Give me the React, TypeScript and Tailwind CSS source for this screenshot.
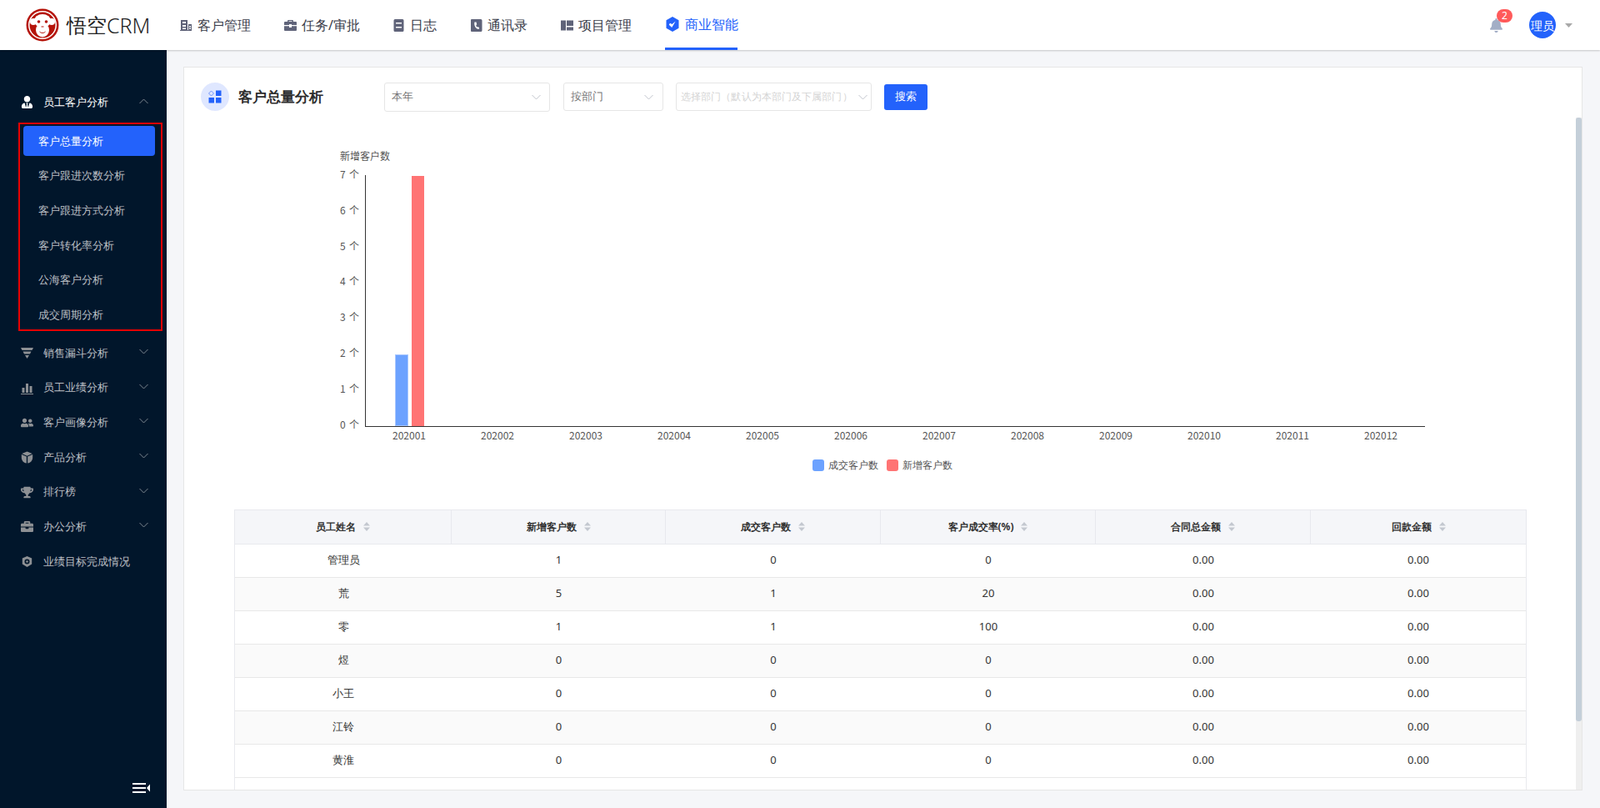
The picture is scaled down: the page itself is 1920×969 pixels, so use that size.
import { FaBell, FaBriefcase, FaTrophy, FaUserFriends, FaUserTie } from "react-icons/fa";

const navItems = [
  { label: "客户管理", w: "w-[125px]", icon: "building" },
  { label: "任务/审批", w: "w-[130px]", icon: "case" },
  { label: "日志", w: "w-[93px]", icon: "note" },
  { label: "通讯录", w: "w-[109px]", icon: "phone" },
  { label: "项目管理", w: "w-[125px]", icon: "board" },
];

const subMenu = ["客户总量分析", "客户跟进次数分析", "客户跟进方式分析", "客户转化率分析", "公海客户分析", "成交周期分析"];

const columns = ["员工姓名", "新增客户数", "成交客户数", "客户成交率(%)", "合同总金额", "回款金额"];

const rows = [
  ["管理员", "1", "0", "0", "0.00", "0.00"],
  ["荒", "5", "1", "20", "0.00", "0.00"],
  ["零", "1", "1", "100", "0.00", "0.00"],
  ["煜", "0", "0", "0", "0.00", "0.00"],
  ["小王", "0", "0", "0", "0.00", "0.00"],
  ["江铃", "0", "0", "0", "0.00", "0.00"],
  ["黄淮", "0", "0", "0", "0.00", "0.00"],
];

function NavIcon({ name }: { name: string }) {
  const fill = "#5f6379";
  return (
    <svg width="15" height="15" viewBox="0 0 15 15" className="shrink-0">
      {name === "building" && (
        <path
          fill={fill}
          fillRule="evenodd"
          d="M1 1h8v12h1V6h4v8H0v-1h1zM3 3v2h4V3zM3 7v2h4V7zM3 10.5V12h4v-1.5zM11 8v1.500h2V8zM11 10.500V12h2v-1.500z"
        />
      )}
      {name === "case" && (
        <path
          fill={fill}
          fillRule="evenodd"
          d="M5 1h5a1 1 0 0 1 1 1v1h3a1 1 0 0 1 1 1v3H9V6H6v1H0V4a1 1 0 0 1 1-1h3V2a1 1 0 0 1 1-1zm.500 1.300V3h4v-.700zM0 8.300h6V10h3V8.300h6V13a1 1 0 0 1-1 1H1a1 1 0 0 1-1-1z"
        />
      )}
      {name === "note" && (
        <path
          fill={fill}
          fillRule="evenodd"
          d="M3 0h9a1.500 1.500 0 0 1 1.500 1.500v12A1.500 1.500 0 0 1 12 15H3a1.500 1.500 0 0 1-1.500-1.500v-12A1.500 1.500 0 0 1 3 0zm1 4v1.500h7V4zm0 5v1.500h7V9z"
        />
      )}
      {name === "phone" && (
        <path
          fill={fill}
          fillRule="evenodd"
          d="M2 0h11a1.500 1.500 0 0 1 1.500 1.500v12A1.500 1.500 0 0 1 13 15H2a1 1 0 0 1-1-1V1a1 1 0 0 1 1-1zm3.500 3.500C5 5 5.200 7.500 6.300 9.200c1 1.700 2.800 2.700 4 2.800l1-1.500-2-1.500-.800.700C7.800 9 7.300 8 7.200 7l1-.500-.700-3z"
        />
      )}
      {name === "board" && (
        <path fill={fill} d="M0 1.500h6v12H0zM7 1.500h8v6.500H7zM7 9.500h8v4H7z" />
      )}
    </svg>
  );
}

function Chevron({ up, className }: { up?: boolean; className?: string }) {
  return (
    <svg width="11" height="7" viewBox="0 0 11 7" className={className}>
      <path
        d={up ? "M.5 6 5.500 1l5 5" : "M.5 1l5 5 5-5"}
        fill="none"
        stroke="currentColor"
        strokeWidth="1"
      />
    </svg>
  );
}

function SideIcon({ name }: { name: string }) {
  const cls = "text-[#8d9094]";
  if (name === "user") return <FaUserTie size={15} className="text-white" />;
  if (name === "users") return <FaUserFriends size={16} className={cls} />;
  if (name === "trophy") return <FaTrophy size={15} className={cls} />;
  if (name === "case") return <FaBriefcase size={15} className={cls} />;
  return (
    <svg width="15" height="15" viewBox="0 0 15 15" className={cls}>
      {name === "funnel" && <path fill="currentColor" d="M0 1h15l-1.500 3h-12zM2.500 5.500h10l-1.500 3H4zM5 10h5l-2.500 4z" />}
      {name === "bars" && <path fill="currentColor" d="M1.500 7h3v6h-3zM6 2h3v11H6zM10.500 5h3v8h-3zM0 14h15v1H0z" />}
      {name === "cube" && (
        <path
          fill="currentColor"
          d="M7.500.5 13.700 3 7.500 5.700 1.300 3zM.8 4l6 2.600v7.900C3 14 .8 11 .8 7.500zM14.200 4v3.500c0 3.500-2.200 6.500-6 7V6.600z"
        />
      )}
      {name === "target" && (
        <path
          fill="currentColor"
          fillRule="evenodd"
          d="M7.500 1l5.700 2.500v7L7.500 14l-5.700-3.500v-7zM7.500 4.500a3 3 0 1 0 0 6 3 3 0 0 0 0-6zm0 1.700a1.300 1.300 0 1 1 0 2.600 1.300 1.300 0 0 1 0-2.600z"
        />
      )}
    </svg>
  );
}

function SideItem({ icon, label, chevron = true }: { icon: string; label: string; chevron?: boolean }) {
  return (
    <div className="h-[41.67px] flex items-center pl-[25px] text-[13px] text-[#bcbfc4]">
      <span className="w-[15px] flex justify-center">
        <SideIcon name={icon} />
      </span>
      <span className="ml-[12px]">{label}</span>
      {chevron && <Chevron className="ml-auto mr-[22px] -mt-[4px] text-[#7f8791]" />}
    </div>
  );
}

function SortCaret() {
  return (
    <svg width="8" height="11" viewBox="0 0 8 11" className="ml-[9px] shrink-0">
      <path fill="#c4c8d0" d="M4 0l4 4.500H0zM4 11L0 6.500h8z" />
    </svg>
  );
}

function Logo() {
  return (
    <svg width="40" height="40" viewBox="0 0 40 40" className="shrink-0">
      <circle cx="20" cy="20" r="19.500" fill="#b5140a" />
      <circle cx="20" cy="20" r="17" fill="#fff" />
      <circle cx="20" cy="20" r="15.500" fill="#b5140a" />
      <circle cx="9" cy="16" r="4" fill="#fff" />
      <circle cx="31" cy="16" r="4" fill="#fff" />
      <ellipse cx="20" cy="15" rx="10" ry="8" fill="#fff" />
      <ellipse cx="20" cy="26" rx="8" ry="8.500" fill="#fff" />
      <circle cx="15.500" cy="16" r="1.800" fill="#b5140a" />
      <circle cx="24.500" cy="16" r="1.800" fill="#b5140a" />
      <path d="M16.500 28c2 2 5 2 7 0" fill="none" stroke="#b5140a" strokeWidth="1" />
      <path d="M18.500 22h3" fill="none" stroke="#b5140a" strokeWidth="1" />
    </svg>
  );
}

function Chart() {
  const months = ["202001", "202002", "202003", "202004", "202005", "202006", "202007", "202008", "202009", "202010", "202011", "202012"];
  const axisFont = { fontFamily: '"Noto Sans CJK SC", sans-serif', fontSize: 12 };
  return (
    <svg width="1400" height="440" viewBox="220 170 1400 440" className="absolute -left-px top-[89px]" style={{ overflow: "visible" }}>
      <g style={axisFont} fill="#555">
        <text x="408" y="192">新增客户数</text>
        {[0, 1, 2, 3, 4, 5, 6, 7].map((n) => (
          <g key={n}>
            <text x="408" y={514 - n * 42.9}>
              {n}
            </text>
            <text x="419" y={514 - n * 42.9}>
              个
            </text>
          </g>
        ))}
        {months.map((m, i) => (
          <text key={m} x={491 + i * 106} y="527" textAnchor="middle">
            {m}
          </text>
        ))}
      </g>
      <line x1="438.500" y1="210" x2="438.500" y2="512" stroke="#333" strokeWidth="1" />
      <line x1="438" y1="511.500" x2="1710" y2="511.500" stroke="#333" strokeWidth="1" />
      <rect x="474.500" y="425.500" width="15" height="85" fill="#6ca2ff" stroke="#a9c8ff" strokeWidth="1" />
      <rect x="494" y="211" width="15" height="300" fill="#ff7474" />
    </svg>
  );
}

export default function App() {
  return (
    <div className="h-[969px] w-[1920px] overflow-hidden flex flex-col bg-[#f5f6f9] text-[#333] font-['Liberation_Sans','Noto_Sans_CJK_SC',sans-serif]">
      {/* Top bar */}
      <header className="relative z-10 h-[60px] shrink-0 bg-white flex items-center shadow-[0_1px_2px_rgba(0,0,0,0.2)]">
        <div className="flex items-center w-[216px] pl-[31px]">
          <Logo />
          <span className="ml-[9px] flex items-center text-[#222] whitespace-nowrap">
            <span className="text-[24px] font-medium font-['Noto_Sans_CJK_SC',sans-serif] leading-none">悟空</span>
            <span className="text-[25px] font-['Inter',sans-serif] font-light leading-none">CRM</span>
          </span>
        </div>
        <nav className="flex items-center h-full">
          {navItems.map((item) => (
            <div key={item.label} className={`${item.w} flex items-center text-[16px] text-[#3a3d4a] whitespace-nowrap`}>
              <NavIcon name={item.icon} />
              <span className="ml-[6px]">{item.label}</span>
            </div>
          ))}
          <div className="relative h-full w-[87px] flex items-center text-[16px] text-[#2362fb] whitespace-nowrap border-b-[3px] border-[#2362fb] pl-[1px]">
            <svg width="16" height="18" viewBox="0 0 16 18" className="shrink-0">
              <path
                fill="#2362fb"
                fillRule="evenodd"
                d="M8 0l7.500 4.300v9.400L8 18 .5 13.700V4.300zM11.700 5.500 7.500 9 5 7.800 3.800 9.800l3.400 3.200z"
              />
            </svg>
            <span className="ml-[7px]">商业智能</span>
          </div>
        </nav>
        <div className="ml-auto flex items-center pr-[33px]">
          <div className="relative">
            <FaBell size={17} className="text-[#a3aec6]" />
            <span className="absolute left-[9px] -top-[11px] w-[19px] h-[16px] rounded-full bg-[#ff5a5a] text-white text-[12px] leading-[16px] text-center">
              2
            </span>
          </div>
          <div className="ml-[31px] w-[32px] h-[32px] rounded-full bg-[#2362fb] text-white text-[14px] flex items-center justify-center whitespace-nowrap">
            理员
          </div>
          <svg width="9" height="5" viewBox="0 0 9 5" className="ml-[11px]">
            <path fill="#a8a8a8" d="M0 0h9L4.500 5z" />
          </svg>
        </div>
      </header>

      <div className="flex-1 flex min-h-0">
        {/* Sidebar */}
        <aside className="relative w-[200px] shrink-0 bg-[#01162b] pt-[42px]">
          <div className="h-[41.67px] flex items-center pl-[25px] text-[13px] text-white">
            <span className="w-[15px] flex justify-center">
              <SideIcon name="user" />
            </span>
            <span className="ml-[12px]">员工客户分析</span>
            <Chevron up className="ml-auto mr-[22px] -mt-[2px] text-[#7f8791]" />
          </div>
          <div className="relative mt-[5px] mb-[4px]">
            {subMenu.map((s, i) => (
              <div key={s} className="h-[41.67px] flex items-center pl-[28px] pr-[14px]">
                <div
                  className={
                    i === 0
                      ? "w-full h-[36px] flex items-center pl-[18px] rounded-[4px] bg-[#2362fb] text-white text-[13px]"
                      : "w-full h-[36px] flex items-center pl-[18px] text-[#bcbfc4] text-[13px]"
                  }
                >
                  {s}
                </div>
              </div>
            ))}
            <div className="absolute left-[22px] top-[-2px] w-[173px] h-[250px] border-2 border-[#e60000]" />
          </div>
          <SideItem icon="funnel" label="销售漏斗分析" />
          <SideItem icon="bars" label="员工业绩分析" />
          <SideItem icon="users" label="客户画像分析" />
          <SideItem icon="cube" label="产品分析" />
          <SideItem icon="trophy" label="排行榜" />
          <SideItem icon="case" label="办公分析" />
          <SideItem icon="target" label="业绩目标完成情况" chevron={false} />
          <svg width="22" height="12" viewBox="0 0 22 12" className="absolute left-[159px] top-[879px]">
            <path fill="#fff" d="M0 0h16v2H0zM0 5h16v2H0zM0 10h16v2H0zM21 1.500v9L17 6z" />
          </svg>
        </aside>

        {/* Main card */}
        <main className="flex-1 min-w-0 pt-[20px] pl-[20px] pr-[21px] pb-[21px]">
          <div className="relative h-full bg-white border border-[#e6e6e6] overflow-hidden">
            <div className="flex items-center h-[68px] pl-[20px] pt-[2px]">
              <div className="w-[34px] h-[34px] rounded-full bg-[#dfe7ff] flex items-center justify-center">
                <svg width="16" height="16" viewBox="0 0 16 16">
                  <path fill="none" stroke="#6f93fb" strokeWidth="1" d="M3.500 1 6.500 4 3.500 7 .5 4z" />
                  <path fill="#2362fb" d="M9 .5h6.500V7H9zM.5 9H7v6.500H.5zM9 9h6.500v6.500H9z" />
                </svg>
              </div>
              <h1 className="ml-[11px] w-[175px] text-[17px] font-bold text-[#2d2d2d] font-['Noto_Sans_CJK_SC',sans-serif]">客户总量分析</h1>
              <div className="w-[199px] h-[35px] border border-[#e6e6e6] rounded-[3px] flex items-center pl-[8px] text-[13px] text-[#777]">
                本年
                <Chevron className="ml-auto mr-[10px] text-[#c0c4cc]" />
              </div>
              <div className="ml-[16px] w-[120px] h-[34px] border border-[#e6e6e6] rounded-[3px] flex items-center pl-[8px] text-[13px] text-[#777]">
                按部门
                <Chevron className="ml-auto mr-[11px] text-[#c0c4cc]" />
              </div>
              <div className="ml-[15px] w-[235px] h-[34px] border border-[#e6e6e6] rounded-[3px] flex items-center pl-[5px] text-[12px] tracking-[0.1px] text-[#d4d4d4] whitespace-nowrap">
                选择部门（默认为本部门及下属部门）
                <Chevron className="ml-auto mr-[4px] shrink-0 text-[#c0c4cc]" />
              </div>
              <button className="ml-[15px] w-[52px] h-[31px] rounded-[3px] bg-[#2362fb] text-white text-[13px]">搜索</button>
            </div>

            <Chart />

            {/* Legend */}
            <div className="absolute left-[754px] top-[468px] flex items-center text-[12px] text-[#555]">
              <span className="w-[14px] h-[14px] rounded-[3px] bg-[#6ca2ff]" />
              <span className="ml-[5px] w-[70px]">成交客户数</span>
              <span className="w-[14px] h-[14px] rounded-[3px] bg-[#ff7474]" />
              <span className="ml-[5px]">新增客户数</span>
            </div>

            {/* Table */}
            <div className="absolute left-[60px] top-[530px] w-[1551px] border-x border-t border-[#e8e9ee] text-[13px]">
              <div className="grid grid-cols-[260px_257px_repeat(4,1fr)] h-[41px] bg-[#f5f6f9] border-b border-[#e8e9ee]">
                {columns.map((c, i) => (
                  <div
                    key={c}
                    className={`flex items-center justify-center pb-px text-[12px] font-bold text-[#333] font-['Noto_Sans_CJK_SC',sans-serif] ${i < 5 ? "border-r border-[#e8e9ee]" : ""}`}
                  >
                    {c}
                    <SortCaret />
                  </div>
                ))}
              </div>
              {rows.map((r, i) => (
                <div key={r[0]} className={`grid grid-cols-[260px_257px_repeat(4,1fr)] h-[40px] border-b border-[#e8e8e8] ${i % 2 === 1 ? "bg-[#fafafa]" : "bg-white"}`}>
                  {r.map((v, j) => (
                    <div key={j} className="flex items-center justify-center pb-[2px]">
                      {v}
                    </div>
                  ))}
                </div>
              ))}
              <div className="h-[40px]" />
            </div>

            {/* Scrollbar */}
            <div className="absolute right-0 top-[60px] bottom-0 w-[7px] bg-[#efefef]">
              <div className="h-[724px] w-full rounded-[3px] bg-[#c4cfd9]" />
            </div>
          </div>
        </main>
      </div>
    </div>
  );
}
